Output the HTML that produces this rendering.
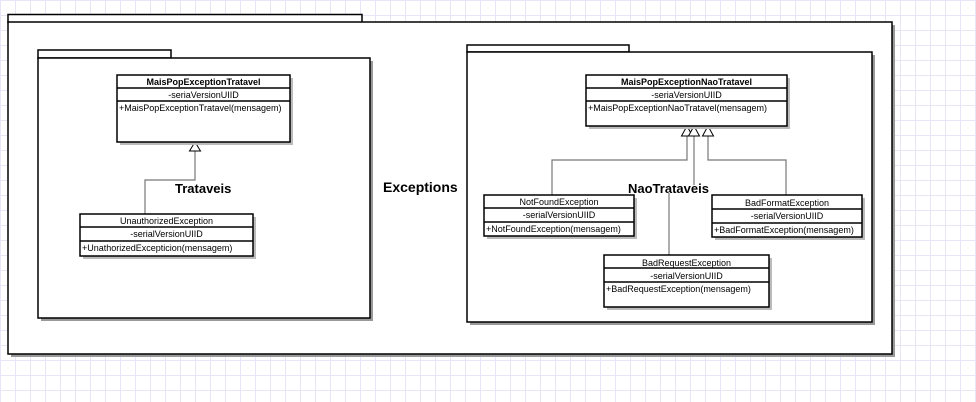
<!DOCTYPE html>
<html><head><style>
html,body{margin:0;padding:0;}
body{width:976px;height:402px;overflow:hidden;background:#fff;
background-image:linear-gradient(#e6e6f6 1px,transparent 1px),linear-gradient(90deg,#e6e6f6 1px,transparent 1px);
background-size:15px 15px;}
svg{position:absolute;left:0;top:0;}
text{font-family:"Liberation Sans",sans-serif;font-size:9px;fill:#000;}
</style></head><body>
<svg width="976" height="402" viewBox="0 0 976 402">
<g stroke="#000" stroke-width="1.5">
<rect x="11" y="25" width="884" height="332" fill="#999" stroke="none"/>
<rect x="8" y="14.5" width="354" height="8" fill="#fff"/>
<rect x="8" y="22" width="884" height="332" fill="#fff"/>
<rect x="41" y="61" width="332" height="260" fill="#999" stroke="none"/>
<rect x="38" y="50" width="133" height="8" fill="#fff"/>
<rect x="38" y="58" width="332" height="260" fill="#fff"/>
<rect x="470" y="55" width="405" height="270" fill="#999" stroke="none"/>
<rect x="467" y="45" width="162" height="7" fill="#fff"/>
<rect x="467" y="52" width="405" height="270" fill="#fff"/>
</g>
<g stroke="#777" stroke-width="1.2" fill="none">
<polyline points="195,151 195,180 145,180 145,214"/>
<polyline points="687,136 687,160 552,160 552,195"/>
<polyline points="694,136 694,185"/>
<polyline points="669,193 669,255"/>
<polyline points="708,136 708,160 786,160 786,195"/>
</g>
<g stroke="#000" stroke-width="1" fill="#fff">
<polygon points="195,142 189.5,151 200.5,151"/>
<polygon points="687,126 681.5,136 692.5,136"/>
<polygon points="694,126 688.5,136 699.5,136"/>
<polygon points="708,126 702.5,136 713.5,136"/>
</g>
<g stroke="#000" stroke-width="1.5">
<rect x="120" y="78" width="173" height="67" fill="#bbb" stroke="none"/>
<rect x="117" y="75" width="173" height="67" fill="#fff"/>
<line x1="117" y1="88" x2="290" y2="88"/><line x1="117" y1="101" x2="290" y2="101"/>
<rect x="83" y="217" width="173" height="42" fill="#bbb" stroke="none"/>
<rect x="80" y="214" width="173" height="42" fill="#fff"/>
<line x1="80" y1="227" x2="253" y2="227"/><line x1="80" y1="241" x2="253" y2="241"/>
<rect x="589" y="78" width="201" height="51" fill="#bbb" stroke="none"/>
<rect x="586" y="75" width="201" height="51" fill="#fff"/>
<line x1="586" y1="88" x2="787" y2="88"/><line x1="586" y1="101" x2="787" y2="101"/>
<rect x="487" y="198" width="150" height="41" fill="#bbb" stroke="none"/>
<rect x="484" y="195" width="150" height="41" fill="#fff"/>
<line x1="484" y1="208" x2="634" y2="208"/><line x1="484" y1="222" x2="634" y2="222"/>
<rect x="715" y="198" width="150" height="42" fill="#bbb" stroke="none"/>
<rect x="712" y="195" width="150" height="42" fill="#fff"/>
<line x1="712" y1="209" x2="862" y2="209"/><line x1="712" y1="223" x2="862" y2="223"/>
<rect x="607" y="258" width="165" height="52" fill="#bbb" stroke="none"/>
<rect x="604" y="255" width="165" height="52" fill="#fff"/>
<line x1="604" y1="268" x2="769" y2="268"/><line x1="604" y1="282" x2="769" y2="282"/>
</g>
<g>
<text x="203.5" y="85" text-anchor="middle" font-weight="bold">MaisPopExceptionTratavel</text>
<text x="203.5" y="98" text-anchor="middle">-seriaVersionUIID</text>
<text x="119" y="111">+MaisPopExceptionTratavel(mensagem)</text>
<text x="166.5" y="224" text-anchor="middle">UnauthorizedException</text>
<text x="166.5" y="237" text-anchor="middle">-serialVersionUIID</text>
<text x="82" y="251">+UnathorizedExcepticion(mensagem)</text>
<text x="686.5" y="85" text-anchor="middle" font-weight="bold">MaisPopExceptionNaoTratavel</text>
<text x="686.5" y="98" text-anchor="middle">-seriaVersionUIID</text>
<text x="588" y="111">+MaisPopExceptionNaoTratavel(mensagem)</text>
<text x="559" y="205" text-anchor="middle">NotFoundException</text>
<text x="559" y="218" text-anchor="middle">-serialVersionUIID</text>
<text x="486" y="232">+NotFoundException(mensagem)</text>
<text x="787" y="206" text-anchor="middle">BadFormatException</text>
<text x="787" y="219" text-anchor="middle">-serialVersionUIID</text>
<text x="714" y="233">+BadFormatException(mensagem)</text>
<text x="686.5" y="266" text-anchor="middle">BadRequestException</text>
<text x="686.5" y="279" text-anchor="middle">-serialVersionUIID</text>
<text x="606" y="292">+BadRequestException(mensagem)</text>
<text x="175" y="193" font-weight="bold" style="font-size:13px">Trataveis</text>
<text x="383" y="192" font-weight="bold" style="font-size:14px">Exceptions</text>
<text x="628" y="193" font-weight="bold" style="font-size:13px">NaoTrataveis</text>
</g>
</svg>
</body></html>
